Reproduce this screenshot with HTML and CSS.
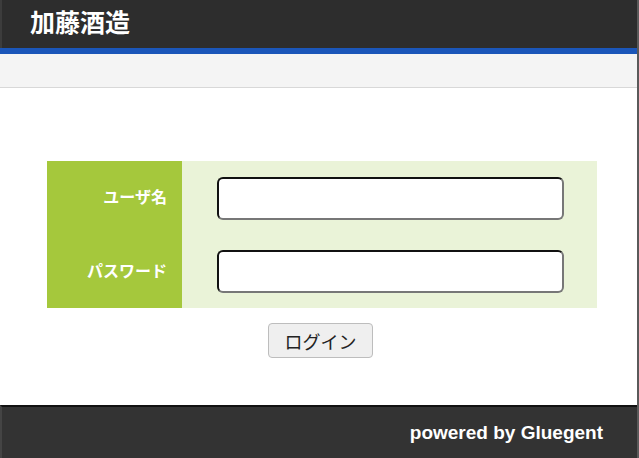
FILE: index.html
```html
<!DOCTYPE html>
<html lang="ja">
<head>
<meta charset="utf-8">
<title>加藤酒造</title>
<link rel="stylesheet" href="styles.css">
</head>
<body>
<div class="page">
  <header class="header">
    <h1 class="title">加藤酒造</h1>
  </header>
  <div class="accent"></div>
  <div class="subbar"></div>
  <main class="content">
    <form class="login">
      <div class="grid">
        <label class="label" for="user">ユーザ名</label>
        <div class="field"><input class="input" id="user" type="text"></div>
        <label class="label" for="pass">パスワード</label>
        <div class="field"><input class="input" id="pass" type="password"></div>
      </div>
      <div class="actions"><button class="btn" type="button">ログイン</button></div>
    </form>
  </main>
  <footer class="footer">powered by Gluegent</footer>
</div>
</body>
</html>
```
FILE: styles.css
```css
html, body {
  margin: 0;
  padding: 0;
  height: 100%;
}
body {
  font-family: "Liberation Sans", "Noto Sans CJK JP", sans-serif;
  background: #fff;
}
.page {
  display: flex;
  flex-direction: column;
  height: 458px;
  border-right: 2px solid #5a5a5a;
  box-sizing: border-box;
}
.header {
  background: #2d2d2d;
  height: 48px;
  display: flex;
  align-items: center;
  padding-left: 30px;
  border-left: 2px solid #3c3c3c;
}
.title {
  margin: 0;
  color: #fff;
  font-size: 25px;
  font-weight: bold;
  font-family: "Noto Sans CJK JP", sans-serif;
  line-height: 1;
  margin-top: -5px;
  margin-left: -2px;
}
.accent {
  height: 6px;
  background: #1b56b9;
}
.subbar {
  height: 33px;
  background: #f4f4f4;
  border-bottom: 1px solid #d8d8d8;
}
.content {
  flex: 1;
  padding-top: 73px;
}
.login {
  margin-left: 47px;
  width: 550px;
}
.grid {
  display: grid;
  grid-template-columns: 135px 1fr;
  grid-template-rows: 74px 73px;
  background: #eaf3d8;
}
.label {
  background: #a5c83c;
  color: #fff;
  font-weight: bold;
  font-size: 16px;
  font-family: "Noto Sans CJK JP", sans-serif;
  display: flex;
  align-items: center;
  justify-content: flex-end;
  padding-right: 15px;
  padding-bottom: 4px;
}
.field {
  display: flex;
  align-items: center;
  padding-left: 35px;
}
.input {
  width: 347px;
  height: 43px;
  box-sizing: border-box;
  border: 2px solid;
  border-color: #111 #777 #777 #111;
  border-radius: 6px;
  background: #fff;
  outline: none;
}
.actions {
  display: flex;
  justify-content: center;
  padding-top: 15px;
  padding-right: 3px;
}
.btn {
  width: 105px;
  height: 35px;
  font-size: 18px;
  font-family: "Noto Sans CJK JP", sans-serif;
  color: #222;
  background: #efefef;
  border: 1px solid #bdbdbd;
  border-radius: 4px;
  padding: 0;
}
.footer {
  height: 53px;
  background: #333;
  border-top: 2px solid #111;
  border-left: 2px solid #444;
  color: #fff;
  font-weight: bold;
  font-size: 19px;
  display: flex;
  align-items: center;
  justify-content: flex-end;
  padding-right: 34px;
  box-sizing: border-box;
}
```
